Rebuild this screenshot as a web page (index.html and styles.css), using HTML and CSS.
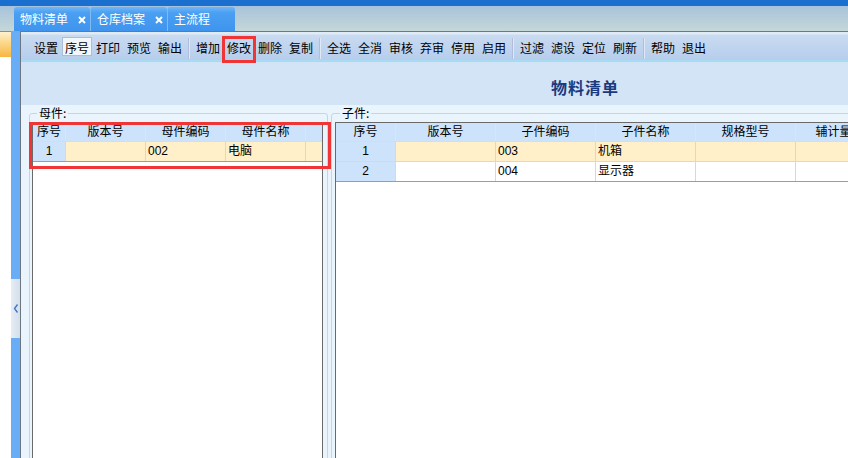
FILE: index.html
```html
<!DOCTYPE html>
<html>
<head>
<meta charset="utf-8">
<title>物料清单</title>
<link rel="stylesheet" href="styles.css">
</head>
<body>
<div class="app">
  <div class="topbar"></div>
  <div class="tabstrip">
    <div class="tab t1"><span class="tab-label">物料清单</span><svg class="close" viewBox="0 0 8 8"><path d="M1 1L7 7M7 1L1 7"/></svg></div>
    <div class="tab t2"><span class="tab-label">仓库档案</span><svg class="close" viewBox="0 0 8 8"><path d="M1 1L7 7M7 1L1 7"/></svg></div>
    <div class="tab t3"><span class="tab-label">主流程</span></div>
  </div>
  <div class="workspace">
    <div class="outer-left"><div class="orange"></div></div>
    <div class="splitter">
      <div class="handle"><svg viewBox="0 0 9 59" width="9" height="59"><polyline points="6.5,25.5 3.5,29.5 6.5,33.5"/></svg></div>
    </div>
    <div class="main">
      <div class="toolbar">
        <span class="tb">设置</span>
        <span class="tb on">序号</span>
        <span class="tb">打印</span>
        <span class="tb">预览</span>
        <span class="tb">输出</span>
        <span class="sep"></span>
        <span class="tb">增加</span>
        <span class="tb marked">修改</span>
        <span class="tb">删除</span>
        <span class="tb">复制</span>
        <span class="sep"></span>
        <span class="tb">全选</span>
        <span class="tb">全消</span>
        <span class="tb">审核</span>
        <span class="tb">弃审</span>
        <span class="tb">停用</span>
        <span class="tb">启用</span>
        <span class="sep"></span>
        <span class="tb">过滤</span>
        <span class="tb">滤设</span>
        <span class="tb">定位</span>
        <span class="tb">刷新</span>
        <span class="sep"></span>
        <span class="tb">帮助</span>
        <span class="tb">退出</span>
      </div>
      <div class="titlebar"><h1>物料清单</h1></div>
      <div class="content">
        <fieldset class="group parent">
          <legend>母件:</legend>
          <div class="grid">
            <div class="row hrow">
              <div class="c w33">序号</div>
              <div class="c w80">版本号</div>
              <div class="c w80">母件编码</div>
              <div class="c w80">母件名称</div>
              <div class="c fill"></div>
            </div>
            <div class="row sel last">
              <div class="c w33 num">1</div>
              <div class="c w80"></div>
              <div class="c w80">002</div>
              <div class="c w80">电脑</div>
              <div class="c fill"></div>
            </div>
            <div class="redbox"></div>
          </div>
        </fieldset>
        <fieldset class="group child">
          <legend>子件:</legend>
          <div class="grid">
            <div class="row hrow">
              <div class="c w60">序号</div>
              <div class="c w100">版本号</div>
              <div class="c w100">子件编码</div>
              <div class="c w100">子件名称</div>
              <div class="c w100">规格型号</div>
              <div class="c w100">辅计量单位</div>
              <div class="c w100">数量</div>
            </div>
            <div class="row sel">
              <div class="c w60 num">1</div>
              <div class="c w100"></div>
              <div class="c w100">003</div>
              <div class="c w100">机箱</div>
              <div class="c w100"></div>
              <div class="c w100"></div>
              <div class="c w100"></div>
            </div>
            <div class="row last">
              <div class="c w60 num">2</div>
              <div class="c w100"></div>
              <div class="c w100">004</div>
              <div class="c w100">显示器</div>
              <div class="c w100"></div>
              <div class="c w100"></div>
              <div class="c w100"></div>
            </div>
          </div>
        </fieldset>
      </div>
    </div>
  </div>
</div>
</body>
</html>
```
FILE: styles.css
```css
* { box-sizing: border-box; }
html, body { margin: 0; padding: 0; }
body {
  width: 848px;
  height: 458px;
  overflow: hidden;
  background: #fff;
  color: #000;
  font-family: "Liberation Sans", "Noto Sans CJK SC", sans-serif;
  font-size: 12px;
}
.app {
  width: 848px;
  height: 458px;
  overflow: hidden;
  display: flex;
  flex-direction: column;
}
.topbar {
  flex: none;
  height: 6px;
  background: #1b6fcf;
}
.tabstrip {
  flex: none;
  height: 25px;
  display: flex;
  align-items: flex-end;
  padding-left: 14px;
  background: linear-gradient(#a7c3db, #c5d7d8);
}
.tab {
  height: 24px;
  display: flex;
  align-items: center;
  padding-left: 6px;
  color: #fff;
  font-family: "Noto Sans CJK SC", sans-serif;
  font-size: 12px;
  line-height: 14px;
  border-radius: 3px 3px 0 0;
  background: linear-gradient(#6fb6f9 0, #4a9ff2 25%, #3f95ee 100%);
}
.tab + .tab { border-left: 1px solid #7fbaf2; }
.t1 { width: 76px; }
.t2 { width: 77px; }
.t3 { width: 68px; }
.close {
  width: 8px;
  height: 8px;
  margin-left: 10px;
  margin-top: 1px;
  stroke: #fff;
  stroke-width: 1.9;
  fill: none;
}
.workspace {
  flex: none;
  height: 440px;
  display: flex;
}
.outer-left {
  flex: none;
  width: 11px;
  background: #fff;
}
.orange {
  height: 26px;
  border-top: 1px solid #8a8f96;
  background: linear-gradient(#fff1cf 0, #fcd98e 40%, #f7b643 100%);
}
.splitter {
  flex: none;
  width: 9px;
  background: #69adf7;
}
.handle {
  margin-top: 248px;
  height: 59px;
  background: linear-gradient(90deg, #e6edf4, #d3dfeb);
}
.handle svg {
  display: block;
  fill: none;
  stroke: #3d73c6;
  stroke-width: 1.3;
}
.main {
  flex: none;
  width: 1129px;
  display: flex;
  flex-direction: column;
  border-left: 1px solid #6b7680;
  border-top: 1px solid #6f7880;
  background: #eaf4fd;
}
.toolbar {
  flex: none;
  height: 29px;
  display: flex;
  align-items: flex-start;
  gap: 1px;
  padding: 5px 0 0 10px;
  border-bottom: 1px solid #a6dcf4;
  background: linear-gradient(#e0ebf6 0, #e0ebf6 2px, #c9dbf1 3px, #b6cdec 100%);
  font-family: "Noto Sans CJK SC", sans-serif;
}
.tb {
  position: relative;
  width: 30px;
  height: 19px;
  padding: 3px 2px 0;
  line-height: 14px;
  border: 1px solid transparent;
  white-space: nowrap;
}
.tb.on {
  background: #f1f6fb;
  border-color: #a9bfd6;
}
.tb.marked::after {
  content: "";
  position: absolute;
  left: -3px;
  right: -3px;
  top: -2px;
  bottom: -8px;
  border: 3px solid #ef3535;
}
.sep {
  width: 2px;
  height: 21px;
  margin: 1px 2px 0;
  border-left: 1px solid #b2bddc;
  border-right: 1px solid #dfe9f6;
}
.titlebar {
  flex: none;
  height: 44px;
  padding-top: 15px;
  text-align: center;
  background: #d2e4f5;
  border-top: 1px solid #bcd2e4;
}
.titlebar h1 {
  margin: 0;
  font-family: "Noto Sans CJK SC", sans-serif;
  font-size: 16px;
  line-height: 20px;
  font-weight: bold;
  letter-spacing: 1px;
  color: #1a3a80;
}
.content {
  flex: 1;
  display: flex;
  gap: 3px;
  padding: 2px 0 0 8px;
  background: #eaf4fd;
}
.group {
  margin: 0;
  min-width: 0;
  display: flex;
  flex-direction: column;
  border: 1px solid #c3d5e8;
  border-radius: 3px;
  padding: 3px 4px 0 2px;
}
.group legend {
  margin-left: 5px;
  padding: 0 2px;
  font-family: "Noto Sans CJK SC", sans-serif;
  font-size: 12px;
  line-height: 12px;
}
.parent {
  flex: none;
  width: 299px;
}
.child {
  flex: 1;
  padding-left: 3px;
}
.grid {
  position: relative;
  flex: 1;
  border: 1px solid #6a6a6a;
  background: #fff;
}
.row {
  display: flex;
  height: 20px;
  border-bottom: 1px solid #d8d8d8;
}
.row.last { border-bottom-color: #9d9d9d; }
.hrow {
  height: 19px;
  background: #cde3fb;
  border-bottom-color: #d9dde2;
}
.c {
  flex: none;
  height: 100%;
  padding: 0 2px;
  border-right: 1px solid #d8d8d8;
  line-height: 19px;
  white-space: nowrap;
  overflow: hidden;
  font-size: 12px;
}
.hrow .c {
  text-align: center;
  padding-top: 1px;
  line-height: 17px;
  border-right-color: #dfe4ea;
}
.sel .c { background: #fff0c9; }
.c.num {
  text-align: center;
  background: #cde3fb;
}
.w33 { width: 33px; }
.w60 { width: 60px; }
.w80 { width: 80px; }
.w100 { width: 100px; }
.fill { flex: 1; border-right: none; }
.redbox {
  position: absolute;
  left: -4px;
  top: -1px;
  width: 302px;
  height: 47px;
  border: 3px solid #ef3535;
}
```
